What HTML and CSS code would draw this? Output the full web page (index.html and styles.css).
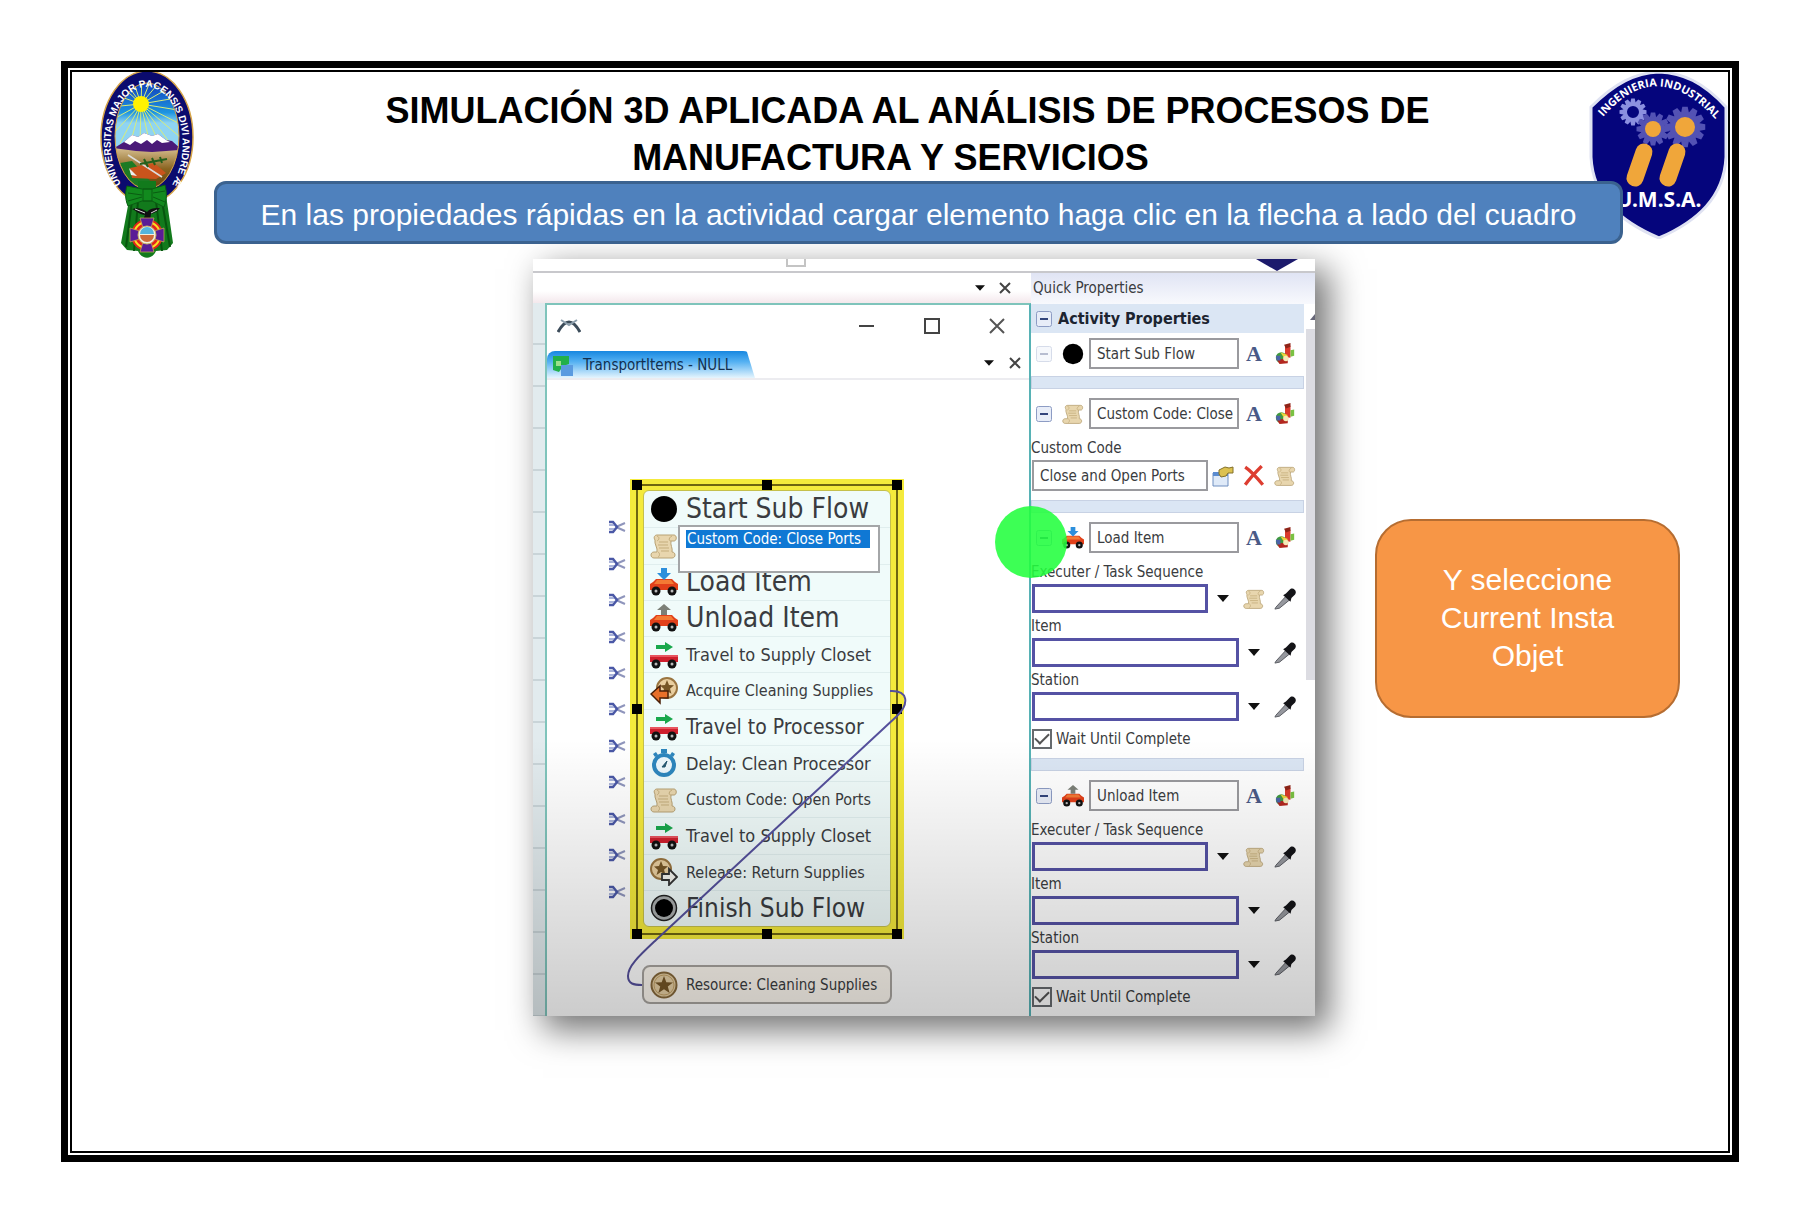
FILE: index.html
```html
<!DOCTYPE html>
<html lang="es">
<head>
<meta charset="utf-8">
<title>Simulación 3D aplicada al análisis de procesos</title>
<link rel="stylesheet" href="styles.css">
</head>
<body>
<svg class="defs" aria-hidden="true">
  <defs>
    <linearGradient id="sky" x1="0" y1="0" x2="0" y2="1"><stop offset="0" stop-color="#1038b8"/><stop offset=".45" stop-color="#1d94e0"/><stop offset=".6" stop-color="#8fd4f2"/></linearGradient>
    <linearGradient id="land" x1="0" y1="0" x2="0" y2="1"><stop offset="0" stop-color="#d9c294"/><stop offset=".5" stop-color="#8a6420"/><stop offset="1" stop-color="#5a3c08"/></linearGradient>
    <clipPath id="oval"><ellipse cx="47" cy="65" rx="32" ry="53"/></clipPath>
    <symbol id="i-scroll" viewBox="0 0 28 28"><path d="M7 3h17c3 0 3 6 0 6h-3c-1 4 2 7 1 11 4 0 4 6 0 6H4c-4 0-4-6 0-6h3c1-4-3-8-2-12C3 5 5 3 7 3z" fill="#e8d6ae" stroke="#b8a274" stroke-width="1"/><path d="M7 4c3 1 2 4 0 5M21 9c-3 0-2-4 1-5M8 20c2 1 2 4 0 5M9 10h9M8 13h10M9 16h10M11 19h8" fill="none" stroke="#c4ad7c"/></symbol>
    <symbol id="i-wheels" viewBox="0 0 28 28"><circle cx="6" cy="23" r="4.5" fill="#111"/><circle cx="22" cy="23" r="4.5" fill="#111"/><circle cx="6" cy="23" r="1.5" fill="#bbb"/><circle cx="22" cy="23" r="1.5" fill="#bbb"/></symbol>
    <symbol id="i-load" viewBox="0 0 28 28"><path d="M0 22v-6l3-2 3-3h16l3 3 3 2v6z" fill="#e2401a"/><path d="M7 12h14l3 4H4z" fill="#f47a34"/><path d="M11 0h6v5h4l-7 7-7-7h4z" fill="#2c8fdc"/><use href="#i-wheels"/></symbol>
    <symbol id="i-unload" viewBox="0 0 28 28"><path d="M0 22v-6l3-2 3-3h16l3 3 3 2v6z" fill="#e2401a"/><path d="M7 12h14l3 4H4z" fill="#f47a34"/><path d="M14 0l7 6h-4v5h-6V6H7z" fill="#7c8078"/><use href="#i-wheels"/></symbol>
    <symbol id="i-travel" viewBox="0 0 28 28"><path d="M0 14h28v7H0z" fill="#cf1f2d"/><path d="M0 14h28v2H0z" fill="#e85560"/><path d="M6 4h9V1l8 5-8 5V8H6z" fill="#19a84c"/><use href="#i-wheels"/></symbol>
    <symbol id="i-star" viewBox="0 0 28 28"><circle cx="14" cy="14" r="12.5" fill="#e6cfa4" stroke="#86683a" stroke-width="2"/><circle cx="14" cy="14" r="10" fill="none" stroke="#c5a368"/><path d="M14 5l2.300 6.200 6.700.2-5.200 4.100 1.800 6.400-5.600-3.700-5.600 3.700 1.800-6.400L5 11.400l6.700-.2z" fill="#765626"/></symbol>
    <symbol id="i-acquire" viewBox="0 0 28 28"><circle cx="17" cy="11" r="10" fill="#e9cfa0" stroke="#9a7540" stroke-width="2"/><path d="M17 3l2 5 5 .3-4 3.500 1.500 5L17 14l-4.500 3L14 12l-4-3.500 5-.5z" fill="#765626"/><path d="M1 17l9-8v5h8v7h-8v5z" fill="#e8702a" stroke="#4a2008" stroke-width="1.500"/></symbol>
    <symbol id="i-release" viewBox="0 0 28 28"><circle cx="11" cy="11" r="10" fill="#e9cfa0" stroke="#9a7540" stroke-width="2"/><path d="M11 3l2 5 5 .3-4 3.500 1.500 5L11 14l-4.500 3L8 12 4 8.500l5-.5z" fill="#765626"/><path d="M27 19l-8-8v5h-7v6h7v5z" fill="#f4f4ee" stroke="#333" stroke-width="1.800"/></symbol>
    <symbol id="i-delay" viewBox="0 0 28 28"><path d="M11 0h6v4h-6zM3 5l3-2 2 3-3 2zM25 5l-3-2-2 3 3 2z" fill="#2d86bd"/><circle cx="14" cy="16" r="10" fill="#edf7fb" stroke="#2d86bd" stroke-width="4"/><path d="M12 18l5-6-2 6z" fill="#24566f" stroke="#24566f"/></symbol>
    <symbol id="i-dot" viewBox="0 0 28 28"><circle cx="14" cy="14" r="13" fill="#000"/></symbol>
    <symbol id="i-finish" viewBox="0 0 28 28"><circle cx="14" cy="14" r="12.500" fill="#a9adad" stroke="#222" stroke-width="1.500"/><circle cx="14" cy="14" r="9" fill="#000"/></symbol>
    <symbol id="i-cut" viewBox="0 0 18 14"><path d="M8 7l9-4M8 7l9 4" stroke="#8f95bc" stroke-width="2"/><path d="M1 2h4l4 5-4 5H1" fill="none" stroke="#4a58a6" stroke-width="2.500"/><path d="M1 5h5M1 9h5" stroke="#8f9cce" stroke-width="1.500"/></symbol>
    <symbol id="i-down" viewBox="0 0 14 8"><path d="M0 0h14L7 8z" fill="#111"/></symbol>
    <symbol id="i-x" viewBox="0 0 12 12"><path d="M1 1l10 10M11 1L1 11" stroke="#444" stroke-width="2"/></symbol>
    <symbol id="i-colors" viewBox="0 0 22 24"><path d="M11 3h6v13h-6z" fill="#d93a2c"/><path d="M10 2l7-2v4l-5 2z" fill="#8e2418"/><path d="M17 8l4-1v7l-4 1z" fill="#7ac142"/><circle cx="7" cy="16" r="6" fill="#3f9a3e"/><path d="M6 10l8 3-3 5z" fill="#f0d23c"/><path d="M2 18l12-1v5l-9 1z" fill="#b3261e"/><circle cx="12" cy="17" r="3" fill="#f6e9b8"/><path d="M1 14h5v5H2z" fill="#4b64a8"/></symbol>
    <symbol id="i-dropper" viewBox="0 0 24 24"><path d="M2 21L13 9l4 4L6 22l-5 1z" fill="#96989e" stroke="#55585e"/><path d="M10 8l3-2 4-4c3-4 9 1 6 5l-4 4-1 4z" fill="#141418"/></symbol>
    <symbol id="i-props" viewBox="0 0 22 22"><path d="M1 8h15v13H1z" fill="#dfeaf8" stroke="#6e8fc0"/><path d="M1 7h15v4H1z" fill="#5a8bd0"/><path d="M7 5l6-3 4 1 4-1v6h-5l-2 3-5 1-2-3z" fill="#dcc150" stroke="#83702a"/></symbol>
    <symbol id="i-delete" viewBox="0 0 20 20"><path d="M2 2c6 4 11 10 16 16M17 1C12 6 7 11 2 18" fill="none" stroke="#dd3d30" stroke-width="3"/></symbol>
    <symbol id="i-minus" viewBox="0 0 16 16"><rect x=".5" y=".5" width="15" height="15" rx="2" fill="#e8edf8" stroke="#8d9cc4"/><path d="M4 8h8" stroke="#33457c" stroke-width="2"/></symbol>
    <g id="gear-teeth"><path id="tooth" d="M-2-15h4l1 5h-6z"/><use href="#tooth" transform="rotate(30)"/><use href="#tooth" transform="rotate(60)"/><use href="#tooth" transform="rotate(90)"/><use href="#tooth" transform="rotate(120)"/><use href="#tooth" transform="rotate(150)"/><use href="#tooth" transform="rotate(180)"/><use href="#tooth" transform="rotate(210)"/><use href="#tooth" transform="rotate(240)"/><use href="#tooth" transform="rotate(270)"/><use href="#tooth" transform="rotate(300)"/><use href="#tooth" transform="rotate(330)"/></g>
  </defs>
</svg>

<main class="slide">
 <div class="frame">
  <header class="header">
    <svg class="crest" viewBox="0 0 94 188" role="img" aria-label="Escudo universitario">
      <ellipse cx="47" cy="66" rx="46" ry="66" fill="#0b0b6e" stroke="#d7a548" stroke-width="1.500"/>
      <g clip-path="url(#oval)">
        <rect x="14" y="10" width="66" height="70" fill="url(#sky)"/>
        <path d="M41 33L14 8M41 33L22 6M41 33L32 6M41 33L42 4M41 33L52 6M41 33L62 8M41 33L74 14M41 33L82 26M41 33L84 40M41 33L82 54M41 33L80 66M41 33L70 72M41 33L60 74M41 33L50 74M41 33L40 74M41 33L30 74M41 33L20 72M41 33L12 64M41 33L10 50M41 33L10 36M41 33L10 22" stroke="#d8ec7a" stroke-width="1"/>
        <rect x="14" y="76" width="66" height="44" fill="url(#land)"/>
        <path d="M14 77l10-6 8-7 6 2 6-4 8 3 6-2 8 6 6 1 8 7v2l-14 1-14 1-16-1z" fill="#4a1a78"/>
        <path d="M24 71l8-7 6 2 6-4 8 3 6-2 8 6 4 2-8 1-5-3-5 4-5-4-6 4-6-3-5 4z" fill="#fff"/>
        <path d="M20 92l12-2 20 22v12H34z" fill="#1c7a24"/><path d="M30 97l24-5 12 10-10 6-24-1z" fill="#c9541c"/>
        <path d="M28 84l34 22" stroke="#ddd" stroke-width="1.500"/><path d="M40 93l27-5M44 88l4 8M52 87l3 7M60 86l2 6" stroke="#24601c" stroke-width="2"/>
        <path d="M29 97l8 8-6-1z" fill="#eee"/>
      </g>
      <ellipse cx="47" cy="65" rx="32" ry="53" fill="none" stroke="#d7a548"/>
      <circle cx="41" cy="33" r="8" fill="#fff200"/>
      <path id="crest-arc" d="M21 113A36 57 0 1 1 73 112" fill="none"/>
      <text class="crest-text"><textPath href="#crest-arc">UNIVERSITAS MAJOR PACENSIS DIVI ANDRE Æ</textPath></text>
      <path d="M38 110h18v14H38zM30 124l36 0 7 48-6 7-11 1c-4 9-14 9-18 0l-11-1-6-7z" fill="#127a1c"/>
      <path d="M32 130l-6 46M38 130l-4 50M56 130l6 50M62 130l8 46" stroke="#07550e" stroke-width="2"/>
      <path d="M27 115l15 3h10l13-4c2 8 2 14-1 22l-12-6H42l-14 5c-3-7-3-14-1-20z" fill="#128a1e" stroke="#0a5c12"/><path d="M43 118h9v12h-9zM28 122l14 2M28 130l14-4M53 122l12-2M53 126l12 5" fill="none" stroke="#0a5c12"/>
      <path d="M32 138c7-2 12 1 15 3 3-4 8-4 13-4-3 4-6 5-9 6l-1 6h-7l2-5c-4 0-7-3-13-6z" fill="#111"/><path d="M35 138l10 4M51 142l6-3" stroke="#ddd"/>
      <circle cx="47" cy="164" r="16" fill="#e3241c"/><circle cx="47" cy="164" r="13" fill="none" stroke="#f8de24" stroke-width="2"/>
      <path d="M40 147h14l-4 13h-6zM40 181h14l-4-13h-6zM30 157v14l13-4v-6zM64 157v14l-13-4v-6z" fill="#5a1c96" stroke="#d0b050" stroke-width=".7"/>
      <circle cx="47" cy="164" r="9" fill="#f4efdc" stroke="#c8b26a"/><path d="M40 163a7 7 0 0 1 14 0z" fill="#55b4dd"/><path d="M40 164h14a7 7 0 0 1-14 0z" fill="#cf6c3a"/>
    </svg>
    <div class="heading">
      <h1 class="title"><span class="title-line">SIMULACIÓN 3D APLICADA AL ANÁLISIS DE PROCESOS DE</span> <span class="title-line title-last">MANUFACTURA Y SERVICIOS</span></h1>
      <p class="banner">En las propiedades rápidas en la actividad cargar elemento haga clic en la flecha a lado del cuadro</p>
    </div>
    <svg class="shield" viewBox="0 0 139 168" role="img" aria-label="Ingeniería Industrial U.M.S.A.">
      <path d="M2 36C26 12 46 2 70 1c24 1 44 10 67 35v50c-2 40-28 64-67 81C30 150 4 126 2 86z" fill="#05057c" stroke="#dfe2f2" stroke-width="3"/>
      <path id="shield-arc" d="M14 46Q69-18 130 52" fill="none"/>
      <text class="shield-text"><textPath href="#shield-arc">INGENIERIA INDUSTRIAL</textPath></text>
      <g fill="#8c90e0"><use href="#gear-teeth" transform="translate(44 41) scale(.9)"/><circle cx="44" cy="41" r="8" fill="none" stroke="#8c90e0" stroke-width="4"/></g>
      <g fill="#5352b4"><use href="#gear-teeth" transform="translate(64 58) scale(1.1)"/><circle cx="64" cy="58" r="12"/><use href="#gear-teeth" transform="translate(96 56) scale(1.35)"/><circle cx="96" cy="56" r="15"/></g>
      <circle cx="64" cy="58" r="8" fill="#f0a63a"/><circle cx="96" cy="56" r="10" fill="#f0a63a"/>
      <path d="M55 81L46 107M88 81L79 107" stroke="#f0a63a" stroke-width="17" stroke-linecap="round"/>
      <text class="shield-name" x="70" y="136">U.M.S.A.</text>
    </svg>
  </header>

  <div class="stage">
   <section class="shot" aria-label="Propiedades rápidas">
    <div class="shot-top"><span class="stub"></span><svg class="tip" viewBox="0 0 42 12"><path d="M0 0h42L21 12z" fill="#1c1a6c"/></svg></div>
    <div class="shot-body">
     <div class="left">
      <div class="docbar"><button class="ghost" aria-label="Lista"><svg class="down-s"><use href="#i-down"/></svg></button><button class="ghost" aria-label="Cerrar"><svg class="x-s"><use href="#i-x"/></svg></button></div>
      <div class="workspace">
       <div class="grid-strip"></div>
       <div class="window">
        <div class="titlebar">
          <svg class="app-icon" viewBox="0 0 24 14"><path d="M1 13C6 4 9 3 12 3s6 1 11 10" fill="none" stroke="#3c4c5a" stroke-width="3"/><path d="M4 1l8 5 8-5" fill="none" stroke="#8ea0ae" stroke-width="2"/></svg>
          <button class="ghost" aria-label="Minimizar"><svg class="ctl" viewBox="0 0 16 16"><path d="M0 8h15" stroke="#444" stroke-width="2"/></svg></button>
          <button class="ghost" aria-label="Maximizar"><svg class="ctl" viewBox="0 0 16 16"><path d="M1 1h14v14H1z" fill="none" stroke="#444" stroke-width="2"/></svg></button>
          <button class="ghost" aria-label="Cerrar ventana"><svg class="ctl" viewBox="0 0 16 16"><path d="M1 1l14 14M15 1L1 15" stroke="#555" stroke-width="2"/></svg></button>
        </div>
        <div class="tabs">
          <button class="tab"><svg class="tab-icon" viewBox="0 0 24 24"><path d="M2 3h16v8l-6 2-4 6-6-2z" fill="#22b04a"/><path d="M5 8h5v5H5z" fill="#9be08a"/><path d="M10 12h12v11H10z" fill="#5a9be0"/></svg>TransportItems - NULL</button>
          <span class="tab-tools"><button class="ghost" aria-label="Lista de fichas"><svg class="down-s"><use href="#i-down"/></svg></button><button class="ghost" aria-label="Cerrar ficha"><svg class="x-s"><use href="#i-x"/></svg></button></span>
        </div>
        <div class="canvas">
          <div class="cuts"><svg><use href="#i-cut"/></svg><svg><use href="#i-cut"/></svg><svg><use href="#i-cut"/></svg><svg><use href="#i-cut"/></svg><svg><use href="#i-cut"/></svg><svg><use href="#i-cut"/></svg><svg><use href="#i-cut"/></svg><svg><use href="#i-cut"/></svg><svg><use href="#i-cut"/></svg><svg><use href="#i-cut"/></svg><svg><use href="#i-cut"/></svg></div>
          <div class="flow">
            <ol class="steps">
              <li class="step big"><svg><use href="#i-dot"/></svg>Start Sub Flow</li>
              <li class="step"><svg><use href="#i-scroll"/></svg><textarea class="rename" aria-label="Nombre de la actividad" spellcheck="false">Custom Code: Close Ports</textarea></li>
              <li class="step big"><svg><use href="#i-load"/></svg>Load Item</li>
              <li class="step big"><svg><use href="#i-unload"/></svg>Unload Item</li>
              <li class="step mid"><svg><use href="#i-travel"/></svg>Travel to Supply Closet</li>
              <li class="step"><svg><use href="#i-acquire"/></svg>Acquire Cleaning Supplies</li>
              <li class="step wide"><svg><use href="#i-travel"/></svg>Travel to Processor</li>
              <li class="step mid"><svg><use href="#i-delay"/></svg>Delay: Clean Processor</li>
              <li class="step"><svg><use href="#i-scroll"/></svg>Custom Code: Open Ports</li>
              <li class="step mid"><svg><use href="#i-travel"/></svg>Travel to Supply Closet</li>
              <li class="step"><svg><use href="#i-release"/></svg>Release: Return Supplies</li>
              <li class="step end"><svg><use href="#i-finish"/></svg>Finish Sub Flow</li>
            </ol>
            <svg class="handles" viewBox="0 0 274 460"><path d="M7 6h260v449H7z" fill="none" stroke="#6e6510" stroke-width="2"/><path d="M2 1h10v10H2zM132 1h10v10h-10zM262 1h10v10h-10zM2 225h10v10H2zM262 225h10v10h-10zM2 450h10v10H2zM132 450h10v10h-10zM262 450h10v10h-10z"/></svg>
          </div>
          <div class="resource"><svg><use href="#i-star"/></svg>Resource: Cleaning Supplies</div>
          <svg class="wire" viewBox="0 0 482 636"><path d="M343 311C362 310 362 324 350 336L109 560C92 576 81 586 81 596C81 604 87 605 95 605" fill="none" stroke="#55509c" stroke-width="2"/></svg>
        </div>
       </div>
      </div>
     </div>

     <aside class="props">
      <h2 class="props-title">Quick Properties</h2>
      <div class="props-main">
       <div class="props-list">
        <h3 class="group"><button class="ghost" aria-label="Contraer"><svg class="minus"><use href="#i-minus"/></svg></button>Activity Properties</h3>
        <div class="activity first"><button class="ghost faded" aria-label="Contraer"><svg class="minus"><use href="#i-minus"/></svg></button><svg class="act"><use href="#i-dot"/></svg><input class="field" aria-label="Actividad" value="Start Sub Flow"><button class="ghost font">A</button><button class="ghost" aria-label="Color"><svg class="tool"><use href="#i-colors"/></svg></button></div>
        <div class="sep"></div>
        <div class="activity"><button class="ghost" aria-label="Contraer"><svg class="minus"><use href="#i-minus"/></svg></button><svg class="act"><use href="#i-scroll"/></svg><input class="field" aria-label="Actividad" value="Custom Code: Close"><button class="ghost font">A</button><button class="ghost" aria-label="Color"><svg class="tool"><use href="#i-colors"/></svg></button></div>
        <label class="lbl tall" for="cc">Custom Code</label>
        <div class="line code"><input class="field" id="cc" value="Close and Open Ports"><button class="ghost" aria-label="Editar"><svg class="tool"><use href="#i-props"/></svg></button><button class="ghost" aria-label="Eliminar"><svg class="tool"><use href="#i-delete"/></svg></button><button class="ghost" aria-label="Código"><svg class="tool"><use href="#i-scroll"/></svg></button></div>
        <div class="sep"></div>
        <div class="activity"><button class="ghost" aria-label="Contraer"><svg class="minus"><use href="#i-minus"/></svg></button><svg class="act"><use href="#i-load"/></svg><input class="field" aria-label="Actividad" value="Load Item"><button class="ghost font">A</button><button class="ghost" aria-label="Color"><svg class="tool"><use href="#i-colors"/></svg></button></div>
        <label class="lbl tall" for="e1">Executer / Task Sequence</label>
        <div class="line"><input class="field blue" id="e1"><button class="ghost" aria-label="Opciones"><svg class="down"><use href="#i-down"/></svg></button><button class="ghost" aria-label="Código"><svg class="tool"><use href="#i-scroll"/></svg></button><button class="ghost" aria-label="Elegir"><svg class="tool"><use href="#i-dropper"/></svg></button></div>
        <label class="lbl" for="t1">Item</label>
        <div class="line"><input class="field blue" id="t1"><button class="ghost" aria-label="Opciones"><svg class="down"><use href="#i-down"/></svg></button><button class="ghost" aria-label="Elegir"><svg class="tool"><use href="#i-dropper"/></svg></button></div>
        <label class="lbl" for="s1">Station</label>
        <div class="line"><input class="field blue" id="s1"><button class="ghost" aria-label="Opciones"><svg class="down"><use href="#i-down"/></svg></button><button class="ghost" aria-label="Elegir"><svg class="tool"><use href="#i-dropper"/></svg></button></div>
        <label class="wait"><input type="checkbox" class="check" checked>Wait Until Complete</label>
        <div class="sep"></div>
        <div class="activity"><button class="ghost" aria-label="Contraer"><svg class="minus"><use href="#i-minus"/></svg></button><svg class="act"><use href="#i-unload"/></svg><input class="field" aria-label="Actividad" value="Unload Item"><button class="ghost font">A</button><button class="ghost" aria-label="Color"><svg class="tool"><use href="#i-colors"/></svg></button></div>
        <label class="lbl tall" for="e2">Executer / Task Sequence</label>
        <div class="line"><input class="field blue" id="e2"><button class="ghost" aria-label="Opciones"><svg class="down"><use href="#i-down"/></svg></button><button class="ghost" aria-label="Código"><svg class="tool"><use href="#i-scroll"/></svg></button><button class="ghost" aria-label="Elegir"><svg class="tool"><use href="#i-dropper"/></svg></button></div>
        <label class="lbl" for="t2">Item</label>
        <div class="line"><input class="field blue" id="t2"><button class="ghost" aria-label="Opciones"><svg class="down"><use href="#i-down"/></svg></button><button class="ghost" aria-label="Elegir"><svg class="tool"><use href="#i-dropper"/></svg></button></div>
        <label class="lbl" for="s2">Station</label>
        <div class="line"><input class="field blue" id="s2"><button class="ghost" aria-label="Opciones"><svg class="down"><use href="#i-down"/></svg></button><button class="ghost" aria-label="Elegir"><svg class="tool"><use href="#i-dropper"/></svg></button></div>
        <label class="wait"><input type="checkbox" class="check" checked>Wait Until Complete</label>
       </div>
       <div class="scroll"><span class="scroll-arrow"></span><span class="thumb"></span></div>
      </div>
     </aside>
    </div>
    <span class="spot"></span>
   </section>
   <p class="note">Y seleccione Current Insta Objet</p>
  </div>
 </div>
</main>
</body>
</html>
```
FILE: styles.css
```css
* { box-sizing: border-box; }
body { margin: 0; background: #fff; font-family: "Liberation Sans", Arial, sans-serif; color: #000; }
svg { display: block; }
.defs { position: absolute; width: 0; height: 0; }
.slide { min-height: 100vh; padding: 61px; display: flex; }
.frame { flex: 1; min-width: 0; border: 7px solid #000; padding: 0 2px 2px; position: relative; }
.frame::before { content: ""; position: absolute; inset: 2px; border: 2px solid #000; pointer-events: none; }

/* header */
.header { display: grid; grid-template-columns: 94px minmax(0, 1fr) 139px; padding: 3px 2px 0 30px; height: 191px; }
.crest { width: 94px; height: 188px; }
.shield { width: 139px; height: 168px; }
.crest-text { font: bold 10px "Liberation Sans", Arial, sans-serif; fill: #fff; }
.shield-text { font: bold 11px "Open Sans", "Noto Sans", sans-serif; fill: #fff; }
.shield-name { font: bold 21px "Noto Sans", sans-serif; fill: #fff; text-anchor: middle; }
.heading { padding: 16px 0 0 20px; position: relative; z-index: 1; }
.title { margin: 0; font-size: 36px; line-height: 47px; font-weight: bold; text-align: center; white-space: nowrap; }
.title-line { display: block; padding-left: 12px; }
.title-last { padding: 0 22px 0 0; }
.banner { margin: 0 -34px 0 0; height: 63px; display: flex; align-items: center; justify-content: center; padding: 4px 0 0; background: #4f81bd; border: 3px solid #3b628f; border-radius: 12px; color: #fff; font-size: 30px; line-height: 36px; white-space: nowrap; }

/* stage */
.stage { display: grid; grid-template-columns: minmax(0, 463fr) 782px minmax(0, 415fr); }
.shot { grid-column: 2; position: relative; background: #fff; box-shadow: 12px 12px 32px 2px rgba(0,0,0,.55); font-family: "DejaVu Sans Condensed", "DejaVu Sans", sans-serif; font-size: 15px; color: #3a3c40; }
.shot::after { content: ""; position: absolute; inset: 480px 0 0; background: linear-gradient(rgba(0,0,0,0), rgba(0,0,0,.2)); pointer-events: none; }
.note { align-self: start; margin: 260px 0 0 60px; width: 305px; height: 199px; border: 2px solid #b66d31; border-radius: 36px; background: #f79646; color: #fff; font-size: 30px; line-height: 38px; text-align: center; padding: 40px 60px 0; }
.shot-top { height: 14px; border-bottom: 2px solid #c8c8cc; display: flex; padding-left: 253px; }
.stub { width: 20px; height: 8px; border: 2px solid #c4c4c4; border-top: 0; }
.tip { width: 42px; height: 12px; margin: 0 17px 0 auto; }
.shot-body { display: grid; grid-template-columns: 498px 284px; }
.left { display: flex; flex-direction: column; }
.docbar { height: 30px; display: flex; justify-content: flex-end; align-items: center; gap: 14px; padding-right: 20px; background: linear-gradient(#fff 60%, #f4e8ec); }
.ghost { border: 0; background: none; padding: 0; font: inherit; color: inherit; display: flex; align-items: center; justify-content: center; }
.down-s { width: 10px; height: 6px; }
.x-s { width: 12px; height: 12px; }
.workspace { flex: 1; display: flex; }
.grid-strip { width: 12px; background: repeating-linear-gradient(#e2ebee 0 40px, #c9d4d8 40px 42px); }
.window { flex: 1; display: flex; flex-direction: column; border: 2px solid #7fc4bb; border-bottom: 0; border-right-color: #57b2b5; background: #fff; }
.titlebar { height: 46px; display: flex; align-items: center; gap: 49px; padding: 0 24px 4px 10px; }
.app-icon { width: 24px; height: 14px; margin-right: auto; }
.ctl { width: 16px; height: 16px; }
.tabs { height: 29px; display: flex; justify-content: space-between; border-bottom: 2px solid #ececf0; }
.tab { border: 0; width: 208px; padding: 0 0 0 4px; display: flex; align-items: center; gap: 8px; background: linear-gradient(#1787e0, #55b1f2 40%, #e6f5fd); border-radius: 8px 12px 0 0; clip-path: polygon(0 0, 96% 0, 100% 100%, 0 100%); font: 15px "DejaVu Sans Condensed", "DejaVu Sans", sans-serif; color: #123050; white-space: nowrap; }
.tab-icon { width: 24px; height: 24px; }
.tab-tools { display: flex; align-items: center; gap: 15px; padding: 0 8px 4px 0; }

/* flow canvas: nodes sit at free positions */
.canvas { position: relative; flex: 1; min-height: 636px; }
.flow { position: absolute; left: 83px; top: 99px; width: 274px; height: 460px; background: #f4ea3c; padding: 11px 13px 12px; }
.handles { position: absolute; inset: 0; width: 274px; height: 460px; }
.steps { list-style: none; margin: 0; padding: 0; height: 437px; display: grid; grid-template-rows: repeat(12, minmax(0, 1fr)); background: #f0fbfa; border-radius: 6px; border: 1px solid #c5c04c; }
.step { display: flex; align-items: center; gap: 8px; padding-left: 6px; border-top: 1px solid #e0eeee; white-space: nowrap; font-size: 16px; }
.step:first-child { border-top: 0; }
.step svg, .resource svg { width: 28px; height: 28px; flex: none; }
.step.mid { font-size: 18px; }
.step.wide { font-size: 21px; }
.step.big { font-size: 28px; line-height: 34px; }
.step.end { font-size: 26px; line-height: 34px; }
.rename { position: relative; z-index: 1; align-self: flex-start; flex: none; margin: -3px 0 0 -8px; width: 202px; height: 48px; resize: none; border: 2px solid #a4a6a8; padding: 3px 0 0 7px; font: 15px/18px "DejaVu Sans Condensed", "DejaVu Sans", sans-serif; color: #fff; background: linear-gradient(#0f78d4, #0f78d4) 6px 3px / 184px 18px no-repeat #fff; overflow: hidden; white-space: nowrap; }
.cuts { position: absolute; left: 61px; top: 129px; height: 401px; display: grid; grid-template-rows: repeat(11, 1fr); align-items: center; }
.cuts svg { width: 18px; height: 14px; }
.resource { position: absolute; left: 95px; top: 585px; width: 250px; height: 39px; border: 2px solid #a8a49f; border-radius: 8px; background: #fdf8f0; display: flex; align-items: center; gap: 8px; padding-left: 6px; font-size: 15px; white-space: nowrap; }
.wire { position: absolute; left: 0; top: 0; width: 482px; height: 636px; pointer-events: none; }

/* quick properties */
.props-title { margin: 0; height: 31px; font-size: 15px; line-height: 31px; font-weight: normal; padding-left: 2px; background: linear-gradient(#e0e4f4, #f8f9fd); }
.props-main { display: flex; }
.props-list { flex: 1; min-width: 0; margin-right: 2px; }
.group { margin: 0; height: 29px; background: #dbe6f4; display: flex; align-items: center; gap: 6px; padding-left: 5px; font-size: 16px; color: #1c2430; }
.minus { width: 16px; height: 16px; }
.faded { opacity: .35; }
.activity { display: flex; align-items: center; height: 31px; padding: 0 8px 0 5px; margin-top: 9px; }
.activity .act { width: 22px; height: 22px; margin: 0 5px 0 10px; }
.activity .field { width: 150px; margin-right: auto; }
.activity .font { width: 22px; margin-right: 9px; }
.activity.first { margin: 5px 0 7px; }
.field { height: 31px; border: 2px solid #9a9a9e; background: transparent; padding: 0 0 0 6px; font: inherit; color: inherit; min-width: 0; border-radius: 0; }
.font { font: bold 22px "Liberation Serif", serif; color: #4a5a86; }
.tool { width: 22px; height: 22px; }
.down { width: 12px; height: 7px; }
.sep { height: 13px; background: #dbe6f4; border: 1px solid #c8d2e4; }
.lbl { display: block; height: 25px; line-height: 27px; white-space: nowrap; }
.lbl.tall { height: 31px; line-height: 38px; }
.line { display: flex; align-items: center; padding: 0 8px 0 1px; height: 29px; gap: 9px; }
.line .field { flex: 1; margin-right: -5px; }
.line .ghost { width: 22px; }
.code { height: 31px; margin-bottom: 9px; }
.line .blue { height: 29px; border: 3px solid #5552a4; }
.wait { display: flex; align-items: center; gap: 4px; height: 20px; margin: 8px 0 9px 1px; white-space: nowrap; }
.check { appearance: none; margin: 0; width: 20px; height: 20px; border: 2px solid #666a6e; display: grid; place-items: center; }
.check:checked::before { content: ""; width: 12px; height: 6px; border: solid #555; border-width: 0 0 2px 2px; transform: rotate(-45deg); margin-top: -4px; }
.scroll { width: 9px; display: flex; flex-direction: column; }
.scroll-arrow { width: 5px; height: 6px; margin: 10px 0 9px 4px; background: #667; clip-path: polygon(100% 0, 100% 100%, 0 100%); }
.thumb { height: 351px; background: #dcdce2; }
.spot { position: absolute; left: 462px; top: 247px; width: 72px; height: 72px; border-radius: 50%; background: rgba(34,255,62,.88); }
```
